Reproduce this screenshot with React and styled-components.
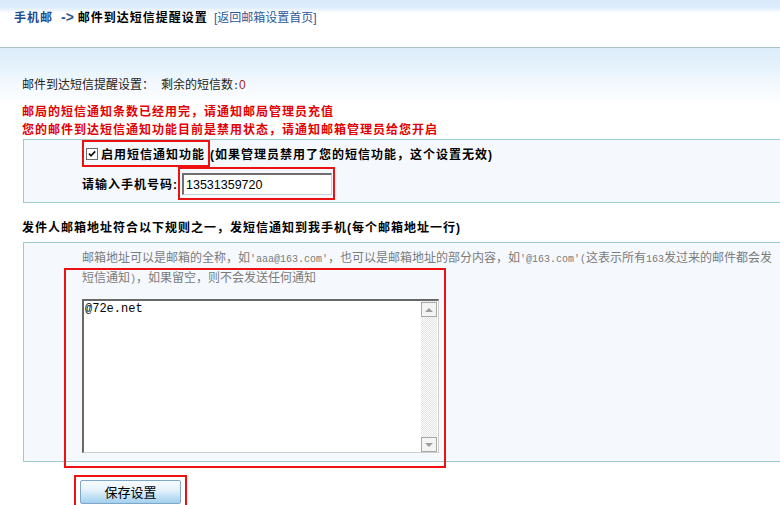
import React from "react";
import styled, { createGlobalStyle } from "styled-components";

const Global = createGlobalStyle`
  html, body { margin: 0; padding: 0; background: #fff; }
  body {
    font-family: "Liberation Sans", "Noto Sans CJK SC", sans-serif;
    font-size: 12px;
    color: #000;
    overflow: hidden;
  }
`;

const Page = styled.div`
  width: 780px;
  height: 505px;
  overflow: hidden;
`;

const Header = styled.div`
  height: 37px;
  padding: 10px 0 0 14px;
  border-bottom: 1px solid #a9c2c6;
  background: linear-gradient(to bottom, #d9eafb 0, #dcecfb 7px, #ecf5fe 10px, #fff 13px, #fff 100%);
  line-height: 16px;
  display: flex;
  align-items: baseline;
  white-space: nowrap;
`;

const Home = styled.span`
  color: #1d4a8c;
  font-weight: bold;
  letter-spacing: 1px;
`;

const Arrow = styled.span`
  color: #2c5597;
  font-weight: bold;
  font-size: 14px;
  line-height: 1;
  margin: 0 4px 0 8px;
`;

const Current = styled.span`
  font-weight: bold;
  letter-spacing: 1px;
`;

const BackLink = styled.a`
  color: #2b5b9c;
  margin-left: 6px;
  text-decoration: none;
`;

const Body = styled.div`
  height: 457px;
  padding: 29px 0 0 22px;
  box-sizing: border-box;
  background: linear-gradient(to bottom, #dcedfb 0, #e5f2fc 18px, #f1f8fd 34px, #f9fcfe 48px, #fff 56px) no-repeat;
  background-size: 100% 60px;
  background-color: #fff;
`;

const Info = styled.div`
  height: 16px;
  line-height: 16px;
  color: #222;
  white-space: nowrap;
`;

const Remain = styled.span`
  margin-left: 7px;
`;

const Count = styled.span`
  color: #a02828;
`;

const Warnings = styled.div`
  margin-top: 10px;
  color: #e30000;
  font-weight: bold;
  letter-spacing: 1px;
  line-height: 18px;
  white-space: nowrap;
`;

const Panel = styled.div`
  position: relative;
  margin: ${(p) => p.$gap}px 0 0 1px;
  border: 1px solid #9ccbcc;
  border-right: none;
  background: #f5f9fd;
  padding: ${(p) => p.$pad};
`;

const Row = styled.div`
  display: flex;
  align-items: center;
  white-space: nowrap;
`;

const Strong = styled.span`
  font-weight: bold;
  letter-spacing: 1px;
`;

const FieldLabel = styled(Strong)`
  display: inline-block;
  min-width: 95px;
`;

const CheckMark = styled.label`
  display: inline-flex;
  align-items: center;
  height: 27px;
  box-sizing: border-box;
  border: 2px solid #ee1111;
  padding: 0 3px 0 2px;
`;

const CheckBox = styled.span`
  display: inline-flex;
  width: 12px;
  height: 12px;
  box-sizing: border-box;
  border: 1px solid #6a6a6a;
  background: #fff;
  margin-right: 3px;
`;

const InputMark = styled.div`
  display: flex;
  border: 2px solid #ee1111;
  padding: 4px 1px 3px 2px;
`;

const PhoneInput = styled.input`
  width: 150px;
  height: 22px;
  box-sizing: border-box;
  margin: 0;
  padding: 0 2px;
  border-top: 2px solid #707070;
  border-left: 2px solid #707070;
  border-right: 1px solid #cfcfcf;
  border-bottom: 1px solid #cfcfcf;
  background: #fff;
  font: 12.5px "Liberation Sans", sans-serif;
  color: #000;
  outline: none;
`;

const SectionTitle = styled.div`
  margin-top: 17px;
  height: 16px;
  font-weight: bold;
  letter-spacing: 1px;
  line-height: 16px;
  white-space: nowrap;
`;

const Hint = styled.div`
  color: #7b7b7b;
  line-height: 20px;
  white-space: nowrap;
`;

const HintLine = styled.div`
  height: 20px;
`;

const Ascii = styled.span`
  font-family: "Liberation Mono", monospace;
  font-size: 10px;
  line-height: 1;
`;

const Editor = styled.div`
  margin-top: 11px;
  width: 357px;
  height: 154px;
  box-sizing: border-box;
  display: flex;
  background: #fff;
  border-top: 2px solid #686868;
  border-left: 2px solid #686868;
  border-right: 1px solid #cfcfcf;
  border-bottom: 1px solid #cfcfcf;
`;

const Area = styled.textarea`
  flex: 1;
  margin: 0;
  padding: 0 1px;
  border: none;
  outline: none;
  resize: none;
  overflow: hidden;
  background: transparent;
  font: 12px/16px "Liberation Mono", monospace;
  color: #000;
`;

const ScrollBar = styled.div`
  width: 16px;
  margin-right: 1px;
  padding-top: 1px;
  display: flex;
  flex-direction: column;
  justify-content: space-between;
  background: repeating-conic-gradient(#e3e3e3 0 25%, #fdfdfd 0 50%) 0 0 / 2px 2px;
`;

const ScrollButton = styled.div`
  height: 15px;
  box-sizing: border-box;
  border: 1px solid #a8a8a8;
  background: #f4f4f4;
  display: flex;
  align-items: center;
  justify-content: center;
`;

const Triangle = styled.span`
  width: 0;
  height: 0;
  border-left: 4px solid transparent;
  border-right: 4px solid transparent;
  ${(p) => (p.$down ? "border-top: 4px solid #9c9c9c;" : "border-bottom: 4px solid #9c9c9c;")}
`;

const Annotation = styled.div`
  position: absolute;
  left: 40px;
  top: 25px;
  width: 382px;
  height: 200px;
  box-sizing: border-box;
  border: 2px solid #ee1111;
  pointer-events: none;
`;

const ButtonMark = styled.div`
  margin: 13px 0 0 52px;
  width: fit-content;
  border: 2px solid #ee1111;
  padding: 3px 4px;
`;

const SaveButton = styled.button`
  display: block;
  width: 101px;
  height: 24px;
  padding: 0;
  border: 1px solid #7fa8c8;
  border-radius: 2px;
  background: linear-gradient(to bottom, #f7fbff 0, #e6f2fb 40%, #bddff5 75%, #a2cfee 100%);
  font: 13px/22px "Noto Sans CJK SC", sans-serif;
  color: #000;
`;

export default function App() {
  return (
    <Page>
      <Global />
      <Header>
        <Home>手机邮</Home>
        <Arrow>-&gt;</Arrow>
        <Current>邮件到达短信提醒设置</Current>
        <BackLink href="#">[返回邮箱设置首页]</BackLink>
      </Header>
      <Body>
        <Info>
          邮件到达短信提醒设置：<Remain>剩余的短信数<Ascii>:</Ascii><Count>0</Count></Remain>
        </Info>
        <Warnings>
          <div>邮局的短信通知条数已经用完，请通知邮局管理员充值</div>
          <div>您的邮件到达短信通知功能目前是禁用状态，请通知邮箱管理员给您开启</div>
        </Warnings>
        <Panel $gap={0} $pad="0 0 2px 58px">
          <Row>
            <CheckMark>
              <CheckBox>
                <svg width="10" height="10" viewBox="0 0 10 10">
                  <path d="M2 4.6 L4 6.8 L8.2 2.4" fill="none" stroke="#111" strokeWidth="1.7" />
                </svg>
              </CheckBox>
              <Strong>启用短信通知功能</Strong>
            </CheckMark>
            <Strong>(如果管理员禁用了您的短信功能，这个设置无效)</Strong>
          </Row>
          <Row>
            <FieldLabel>请输入手机号码:</FieldLabel>
            <InputMark>
              <PhoneInput defaultValue="13531359720" />
            </InputMark>
          </Row>
        </Panel>
        <SectionTitle>发件人邮箱地址符合以下规则之一，发短信通知到我手机(每个邮箱地址一行)</SectionTitle>
        <Panel $gap={6} $pad="5px 0 8px 58px">
          <Hint>
            <HintLine>
              邮箱地址可以是邮箱的全称，如<Ascii>'aaa@163.com'</Ascii>，也可以是邮箱地址的部分内容，如<Ascii>'@163.com'(</Ascii>这表示所有<Ascii>163</Ascii>发过来的邮件都会发
            </HintLine>
            <HintLine>
              短信通知<Ascii>)</Ascii>，如果留空，则不会发送任何通知
            </HintLine>
          </Hint>
          <Editor>
            <Area defaultValue="@72e.net" />
            <ScrollBar>
              <ScrollButton>
                <Triangle />
              </ScrollButton>
              <ScrollButton>
                <Triangle $down />
              </ScrollButton>
            </ScrollBar>
          </Editor>
          <Annotation />
        </Panel>
        <ButtonMark>
          <SaveButton>保存设置</SaveButton>
        </ButtonMark>
      </Body>
    </Page>
  );
}
